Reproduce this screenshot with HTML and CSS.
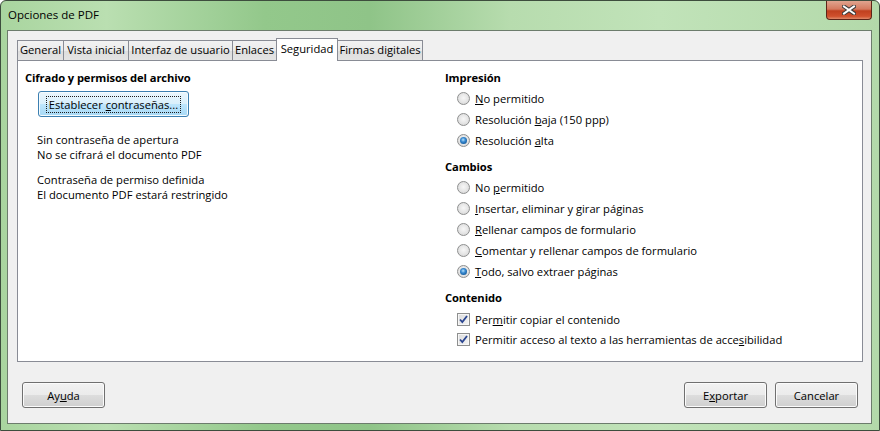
FILE: index.html
```html
<html>
    <head>
        <title>Opciones de PDF</title>
        <meta charset="UTF-8">
        <link rel="stylesheet" href="styles.css">
    </head>
    <body>
        <div class="window">
            <div class="titlebar">
                <span class="title">Opciones de PDF</span>
                <button class="close">
                    <svg width="14" height="10" viewBox="0 0 14 10">
                        <path d="M2 1.5 L12 8.5 M12 1.5 L2 8.5" stroke="#3b3b3b" stroke-width="4" stroke-linecap="square"/>
                        <path d="M2 1.5 L12 8.5 M12 1.5 L2 8.5" stroke="#ffffff" stroke-width="2" stroke-linecap="square"/>
                    </svg>
                </button>
            </div>
            <div class="client">
                <div class="tabs">
                    <div class="tab" style="width:47px">General</div>
                    <div class="tab" style="width:66px">Vista inicial</div>
                    <div class="tab" style="width:105px">Interfaz de usuario</div>
                    <div class="tab" style="width:45px">Enlaces</div>
                    <div class="tab active" style="width:62px">Seguridad</div>
                    <div class="tab" style="width:86px">Firmas digitales</div>
                </div>
                <div class="panel">
                    <div class="col">
                        <div class="heading">Cifrado y permisos del archivo</div>
                        <button class="btn btn-hot"><span class="focus">Establecer <u>c</u>ontraseñas...</span></button>
                        <div class="info">
                            Sin contraseña de apertura<br>
                            No se cifrará el documento PDF
                        </div>
                        <div class="info second">
                            Contraseña de permiso definida<br>
                            El documento PDF estará restringido
                        </div>
                    </div>
                    <div class="col">
                        <div class="heading">Impresión</div>
                        <div class="opt"><span class="radio"></span><span><u>N</u>o permitido</span></div>
                        <div class="opt"><span class="radio"></span><span>Resolución <u>b</u>aja (150 ppp)</span></div>
                        <div class="opt"><span class="radio checked"></span><span>Resolución <u>a</u>lta</span></div>

                        <div class="heading group">Cambios</div>
                        <div class="opt"><span class="radio"></span><span>No <u>p</u>ermitido</span></div>
                        <div class="opt"><span class="radio"></span><span><u>I</u>nsertar, eliminar y girar páginas</span></div>
                        <div class="opt"><span class="radio"></span><span><u>R</u>ellenar campos de formulario</span></div>
                        <div class="opt"><span class="radio"></span><span><u>C</u>omentar y rellenar campos de formulario</span></div>
                        <div class="opt"><span class="radio checked"></span><span><u>T</u>odo, salvo extraer páginas</span></div>

                        <div class="heading group">Contenido</div>
                        <div class="opt first">
                            <span class="check"><svg width="11" height="11" viewBox="0 0 11 11"><path d="M2 5.5 L4.3 8 L9 2" fill="none" stroke="#2a4590" stroke-width="1.8"/></svg></span>
                            <span>Per<u>m</u>itir copiar el contenido</span>
                        </div>
                        <div class="opt short">
                            <span class="check"><svg width="11" height="11" viewBox="0 0 11 11"><path d="M2 5.5 L4.3 8 L9 2" fill="none" stroke="#2a4590" stroke-width="1.8"/></svg></span>
                            <span>Permitir acceso al texto a las herramientas de acce<u>s</u>ibilidad</span>
                        </div>
                    </div>
                </div>
                <div class="footer">
                    <button class="btn">Ay<u>u</u>da</button>
                    <span class="spacer"></span>
                    <button class="btn">E<u>x</u>portar</button>
                    <button class="btn">Cancelar</button>
                </div>
            </div>
        </div>
    </body>
</html>
```
FILE: styles.css
```css
body {
    margin: 0;
    padding: 0;
    font-family: 'Open Sans', sans-serif;
    font-size: 11.2px;
    color: #000;
    background-color: #ffffff;
}
.window {
    width: 880px;
    height: 431px;
    box-sizing: border-box;
    border: 1px solid #3d4d3d;
    border-radius: 6px 6px 0 0;
    background: linear-gradient(to right, #a9d59f 0%, #badfb1 12%, #93c88b 30%, #8fc488 42%, #b7dcae 58%, #c1e3b9 75%, #b3d9aa 100%);
    display: flex;
    flex-direction: column;
}
.titlebar {
    height: 29px;
    display: flex;
    align-items: flex-start;
    padding-left: 7px;
}
.title {
    margin-top: 6px;
    font-size: 11.5px;
}
.close {
    margin-left: auto;
    margin-right: 7px;
    width: 46px;
    height: 19px;
    padding: 0;
    border: 1px solid #5c2418;
    border-top: none;
    border-radius: 0 0 4px 4px;
    background: linear-gradient(#e0a48f 0%, #d47a5f 45%, #c0401f 55%, #d0502d 85%, #e08a6a 100%);
    display: flex;
    align-items: center;
    justify-content: center;
}
.client {
    flex: 1;
    margin: 0 7px 6px 6px;
    border: 1px solid #6c7c6c;
    background-color: #f0f0f0;
    display: flex;
    flex-direction: column;
    padding: 7px 8px 0 9px;
}
.tabs {
    display: flex;
    align-items: flex-end;
    height: 22px;
}
.tab {
    box-sizing: border-box;
    height: 20px;
    line-height: 18px;
    margin-right: -1px;
    border: 1px solid #898c95;
    border-bottom: none;
    background: linear-gradient(#f2f2f2 0%, #ebebeb 50%, #dddddd 51%, #e4e4e4 100%);
    text-align: center;
    white-space: nowrap;
}
.tab.active {
    height: 23px;
    line-height: 20px;
    margin-bottom: -1px;
    background: #ffffff;
    position: relative;
    z-index: 1;
}
.panel {
    flex: 1;
    border: 1px solid #898c95;
    background-color: #ffffff;
    display: grid;
    grid-template-columns: 420px 1fr;
    align-content: start;
    padding: 6px 0 0 7px;
}
.heading {
    height: 21px;
    line-height: 21px;
    font-weight: bold;
    letter-spacing: -0.1px;
}
.heading.group {
    margin-top: 5px;
}
.btn {
    box-sizing: border-box;
    width: 83px;
    height: 26px;
    padding: 0;
    border: 1px solid #707070;
    border-radius: 3px;
    background: linear-gradient(#f2f2f2 0%, #ebebeb 50%, #dddddd 51%, #cfcfcf 100%);
    box-shadow: inset 0 0 0 1px #fbfbfb;
    font-family: inherit;
    font-size: inherit;
    color: #000;
}
.btn-hot {
    width: 151px;
    margin: 3px 0 0 13px;
    border-color: #3c7fb1;
    background: linear-gradient(#eaf6fd 0%, #d9f0fc 50%, #bee6fd 51%, #a7d9f5 100%);
    box-shadow: inset 0 0 0 1px #f4fbfe;
}
.focus {
    display: inline-block;
    padding: 0 2px;
    line-height: 15px;
    border: 1px dotted #1d1d1d;
}
.info {
    margin: 15px 0 0 12px;
    line-height: 15px;
}
.info.second {
    margin-top: 10px;
}
.opt {
    height: 21px;
    display: flex;
    align-items: center;
    gap: 5px;
    padding-left: 12px;
    white-space: nowrap;
}
.opt.first {
    height: 22px;
}
.opt.short {
    height: 19px;
}
.radio {
    box-sizing: border-box;
    width: 13px;
    height: 13px;
    border: 1px solid #8e8f8f;
    border-radius: 50%;
    background: radial-gradient(circle at 50% 45%, #f7f7f7 0%, #e6e6e6 50%, #d0d0d0 100%);
    display: flex;
    align-items: center;
    justify-content: center;
}
.radio.checked::after {
    content: '';
    width: 7px;
    height: 7px;
    border-radius: 50%;
    background: radial-gradient(circle at 45% 40%, #b9e3fb 0%, #3e8ed4 35%, #135c9e 75%, #0d3f75 100%);
}
.check {
    box-sizing: border-box;
    width: 13px;
    height: 13px;
    border: 1px solid #8e8f8f;
    background: linear-gradient(135deg, #dcdcdc 0%, #f4f4f4 100%);
    box-shadow: inset 0 0 0 1px #f6f6f6;
    display: flex;
    align-items: center;
    justify-content: center;
}
.footer {
    display: flex;
    gap: 8px;
    padding: 20px 5px 15px 5px;
}
.spacer {
    flex: 1;
}
```
